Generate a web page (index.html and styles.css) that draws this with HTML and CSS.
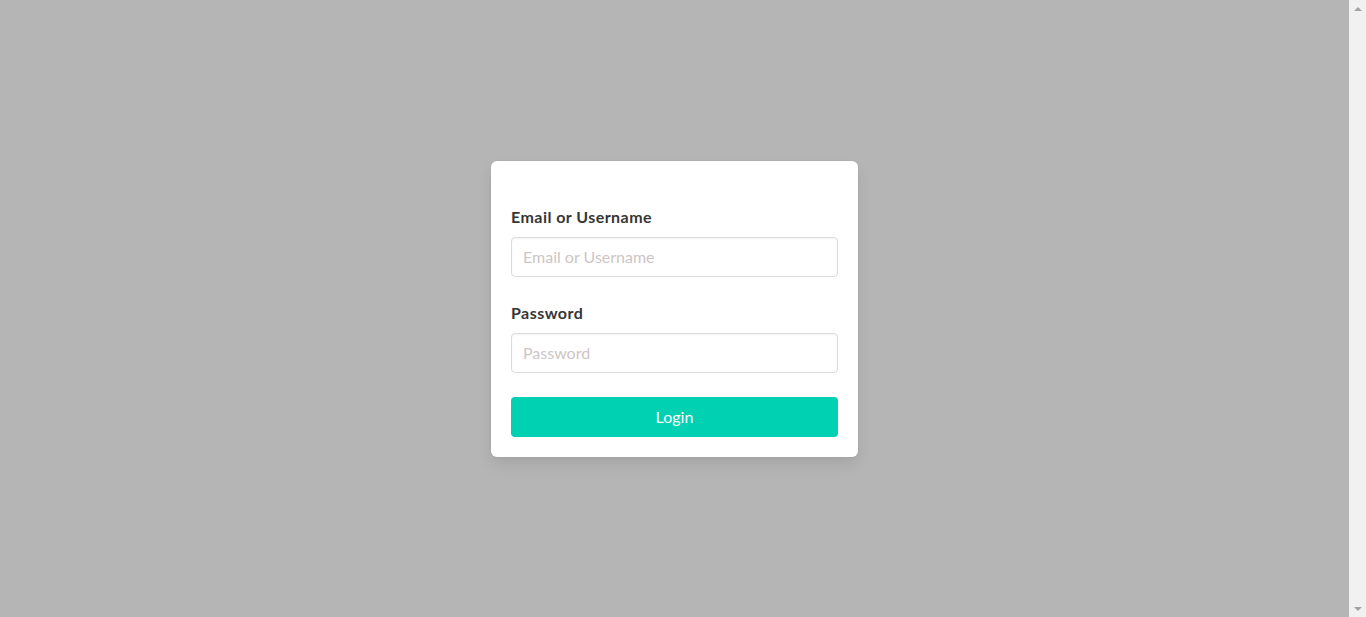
FILE: index.html
```html
<!DOCTYPE html>
<html lang="en">
<head>
<meta charset="utf-8">
<title>Login</title>
<link rel="stylesheet" href="styles.css">
</head>
<body>
<main class="page">
  <form class="box">
    <div class="field">
      <label class="label" for="user">Email or Username</label>
      <input class="input" id="user" type="text" placeholder="Email or Username">
    </div>
    <div class="field">
      <label class="label" for="pass">Password</label>
      <input class="input" id="pass" type="password" placeholder="Password">
    </div>
    <button class="button" type="button">Login</button>
  </form>
</main>
<div class="scrollbar" aria-hidden="true">
  <span class="arrow"><svg width="8" height="4" viewBox="0 0 8 4"><path d="M0 4 L4 0 L8 4 Z" fill="#a3a3a3"/></svg></span>
  <span class="arrow"><svg width="8" height="4" viewBox="0 0 8 4"><path d="M0 0 L8 0 L4 4 Z" fill="#a3a3a3"/></svg></span>
</div>
</body>
</html>
```

FILE: styles.css
```css
html {
  overflow: hidden;
  background: #b5b5b5;
}
body {
  margin: 0;
  min-height: 100vh;
  display: flex;
  font-family: Lato, "Noto Sans", "Liberation Sans", sans-serif;
  font-size: 16px;
  line-height: 1.5;
  color: #363636;
}
.page {
  flex: 1;
  display: flex;
  align-items: center;
  justify-content: center;
}
.scrollbar {
  width: 17px;
  flex: none;
  background: #f1f1f1;
  display: flex;
  flex-direction: column;
  justify-content: space-between;
}
.arrow {
  height: 17px;
  display: flex;
  align-items: center;
  justify-content: center;
}
.arrow svg {
  display: block;
}
.box {
  width: 367px;
  box-sizing: border-box;
  background: #fff;
  border-radius: 6px;
  padding: 44px 20px 20px;
  box-shadow: 0 8px 16px -2px rgba(10,10,10,0.1), 0 0 0 1px rgba(10,10,10,0.02);
  display: flex;
  flex-direction: column;
}
.field {
  display: flex;
  flex-direction: column;
  margin-bottom: 24px;
}
.label {
  font-weight: 700;
  color: #363636;
  margin-bottom: 8px;
  line-height: 24px;
  letter-spacing: 0.45px;
}
.input {
  height: 40px;
  box-sizing: border-box;
  border: 1px solid #dbdbdb;
  border-radius: 4px;
  padding: 0 11px;
  font: inherit;
  color: #363636;
  box-shadow: inset 0 1px 2px rgba(10,10,10,0.05);
  outline: none;
}
.input::placeholder {
  color: #cdc6c6;
}
.button {
  height: 40px;
  border: none;
  border-radius: 4px;
  background: #00d1b2;
  color: #fff;
  font: inherit;
  cursor: pointer;
}
```
